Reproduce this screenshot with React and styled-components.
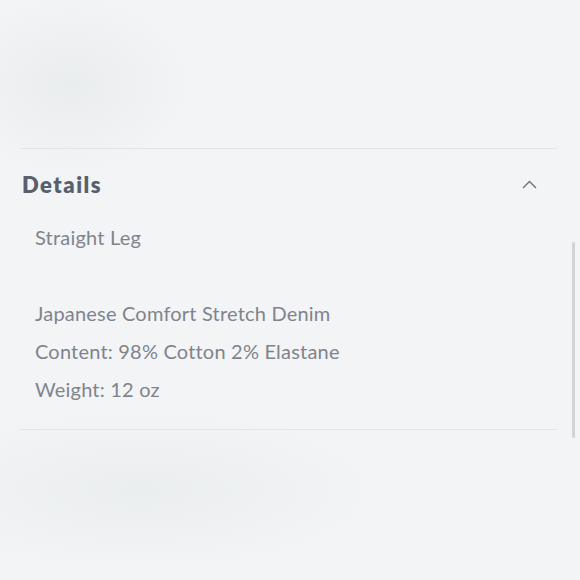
import styled, { createGlobalStyle } from 'styled-components';

const GlobalStyle = createGlobalStyle`
    html, body {
        margin: 0;
        padding: 0;
        background: #f2f4f6;
    }
`;

const Page = styled.div`
    position: relative;
    width: 580px;
    height: 580px;
    overflow: hidden;
    background:
        radial-gradient(ellipse 120px 90px at 70px 85px, rgba(232, 235, 236, 0.8), rgba(242, 244, 246, 0) 100%),
        radial-gradient(ellipse 240px 80px at 140px 490px, rgba(233, 236, 237, 0.8), rgba(242, 244, 246, 0) 100%),
        #f2f4f6;
    font-family: Lato, 'Liberation Sans', sans-serif;
`;

const Spacer = styled.div`
    height: 148px;
`;

const Accordion = styled.section`
    margin: 0 23px 0 20px;
    border-top: 1px solid #e2e4e7;
    border-bottom: 1px solid #e2e4e7;
`;

const Header = styled.div`
    display: flex;
    align-items: center;
    justify-content: space-between;
    height: 70px;
    padding: 0 20px 0 2px;
`;

const Title = styled.h3`
    margin: 0;
    font-size: 22px;
    font-weight: 800;
    letter-spacing: 1.5px;
    color: #57606c;
`;

const Chevron = styled.svg`
    width: 15px;
    height: 9px;
    display: block;
`;

const Body = styled.div`
    padding: 0 0 20px 15px;
`;

const Line = styled.p`
    margin: 0;
    height: 38px;
    line-height: 36px;
    font-size: 20px;
    font-weight: 400;
    letter-spacing: 0.2px;
    color: #7f848c;
`;

const Scrollbar = styled.div`
    position: absolute;
    right: 5px;
    top: 242px;
    width: 3px;
    height: 196px;
    border-radius: 2px;
    background: #d2d3d6;
`;

const lines = [
    'Straight Leg',
    '',
    'Japanese Comfort Stretch Denim',
    'Content: 98% Cotton 2% Elastane',
    'Weight: 12 oz',
];

export default function App() {
    return (
        <Page>
            <GlobalStyle />
            <Spacer />
            <Accordion>
                <Header>
                    <Title>Details</Title>
                    <Chevron viewBox="0 0 15 9" fill="none">
                        <path d="M1 8 L7.5 1.5 L14 8" stroke="#6b7179" strokeWidth="1.4" />
                    </Chevron>
                </Header>
                <Body>
                    {lines.map((text, i) => (
                        <Line key={i}>{text}</Line>
                    ))}
                </Body>
            </Accordion>
            <Scrollbar />
        </Page>
    );
}
